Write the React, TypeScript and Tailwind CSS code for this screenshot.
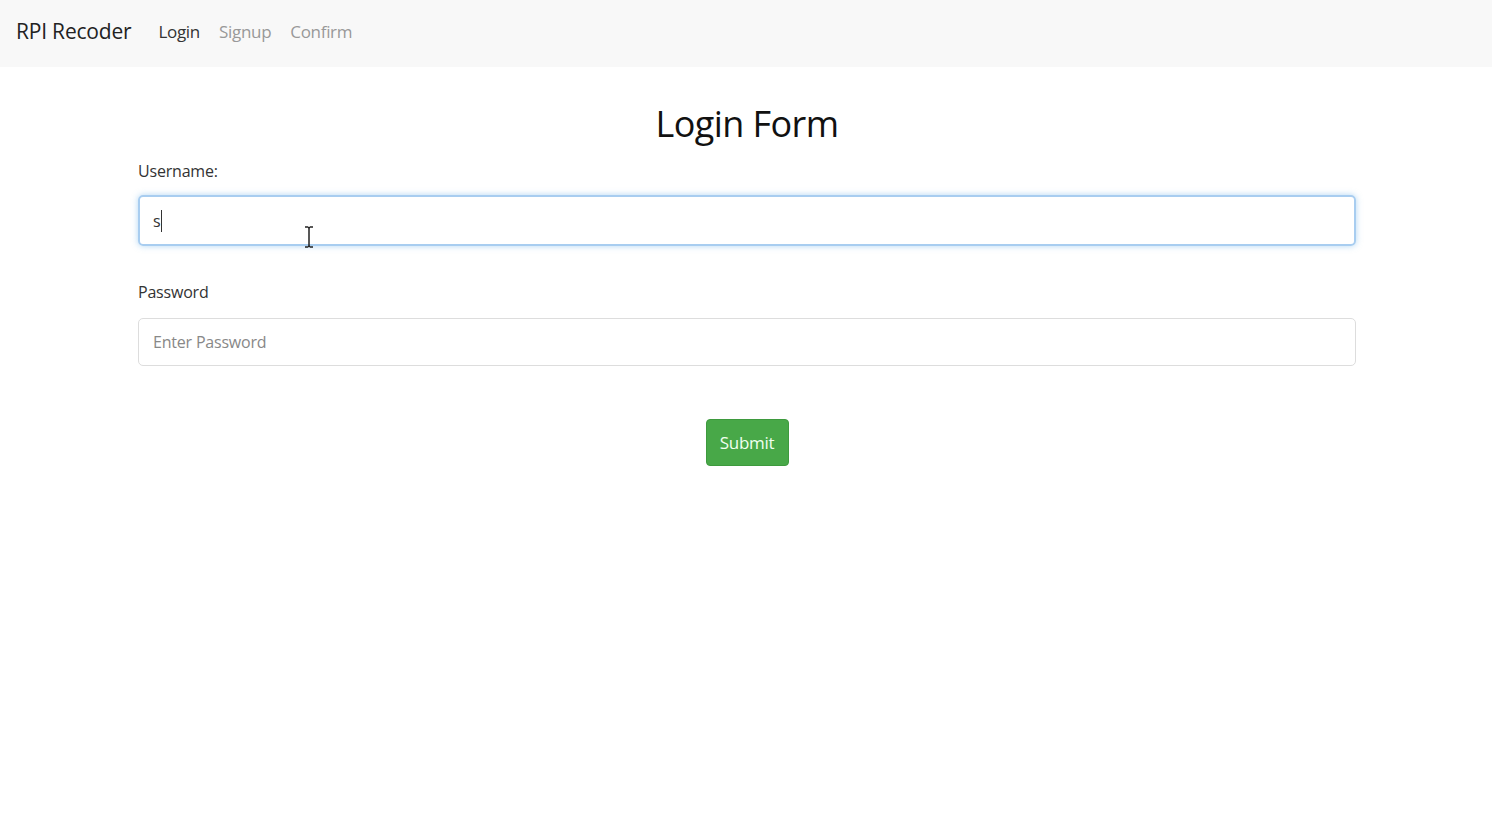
export default function App() {
  return (
    <div className="min-h-[820px] bg-white text-[#333] font-['Open_Sans',sans-serif]">
      <nav className="h-[67px] bg-[#f8f8f8] flex items-center px-4 pb-[4px]">
        <span className="text-[21px] text-[#222] tracking-[-0.2px] mr-[27px]">RPI Recoder</span>
        <div className="flex gap-[19px] text-[17px] tracking-[-0.3px]">
          <span className="text-[#333]">Login</span>
          <span className="text-[#999]">Signup</span>
          <span className="text-[#999]">Confirm</span>
        </div>
      </nav>
      <main className="ml-[138px] mr-[136px] relative">
        <h1 className="text-center text-[36px] text-[#111] tracking-[-0.6px] pt-[30px] leading-[54px]">Login Form</h1>
        <label className="block text-[16px] tracking-[-0.2px] mt-[8px] leading-[24px]">Username:</label>
        <div className="relative mt-[12px]">
          <div className="h-[51px] rounded-[5px] border-2 border-[#a8cdf0] shadow-[0_0_6px_rgba(102,175,233,0.5)] flex items-center px-[13px] text-[16px]">
            <span>s</span>
            <span className="w-px h-[22px] bg-[#333]" />
          </div>
          <svg className="absolute left-[166px] top-[31px]" width="10" height="22" viewBox="0 0 10 22" fill="none" stroke="#222" strokeWidth="1.5">
            <path d="M1 1h3M6 1h3M5 2v18M1 21h3M6 21h3M4 1.5h2M4 20.5h2" />
          </svg>
        </div>
        <label className="block text-[16px] tracking-[-0.2px] mt-[34px] leading-[24px]">Password</label>
        <div className="mt-[14px] h-[48px] rounded-[5px] border border-[#ddd] flex items-center px-[14px] text-[16px] tracking-[-0.2px] text-[#888]">
          Enter Password
        </div>
        <div className="flex justify-center mt-[53px]">
          <button className="w-[83px] h-[47px] rounded-[4px] bg-[#48a848] border border-[#3e9a3e] text-[#f0fff0] text-[17px] tracking-[-0.3px]">
            Submit
          </button>
        </div>
      </main>
    </div>
  );
}
